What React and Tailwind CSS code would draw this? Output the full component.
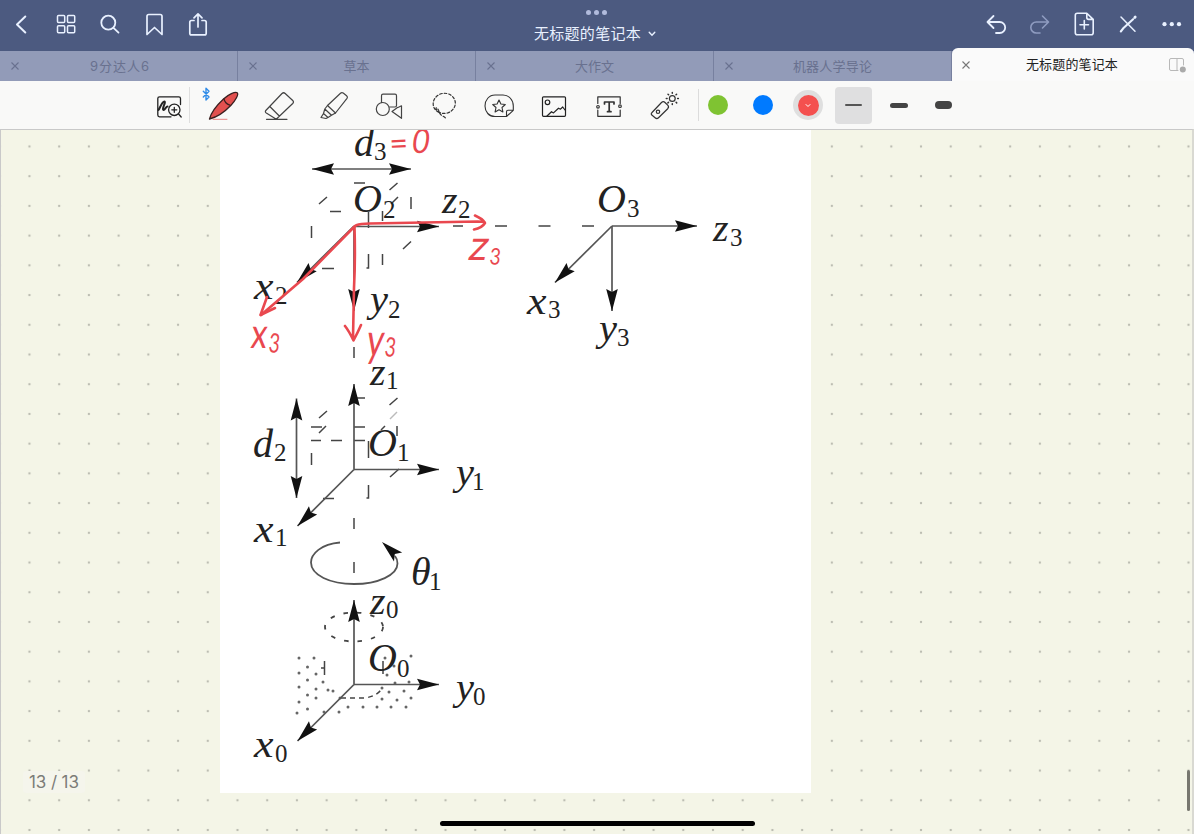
import React from "react";

const Icon = ({ vb, className = "", children }) => {
  const [, , w, h] = vb.split(" ");
  return (
    <svg
      viewBox={vb}
      width={w}
      height={h}
      fill="none"
      strokeLinecap="round"
      strokeLinejoin="round"
      className={"shrink-0 " + className}
    >
      {children}
    </svg>
  );
};

const Close = ({ className = "" }) => (
  <svg viewBox="0 0 10 10" width="10" height="10" fill="none" stroke="currentColor" strokeWidth="1.1" className={"shrink-0 " + className}>
    <path d="M1.5 1.5l7 7M8.5 1.5l-7 7" />
  </svg>
);

const TABS = [
  { name: "9分达人6", spacing: "tracking-[1px] pl-[3px]" },
  { name: "草本", spacing: "tracking-normal" },
  { name: "大作文", spacing: "tracking-normal" },
  { name: "机器人学导论", spacing: "tracking-[0.2px]" },
];

const Header = () => (
  <header className="flex h-[51px] shrink-0 items-start justify-between bg-[#4c5a80] text-[#e9f1ff]">
    <nav className="flex w-[220px]">
      <Icon vb="0 0 44 49" className="stroke-current stroke-2">
        <path d="M25.3 16.5L17 24.5l8.3 8" />
      </Icon>
      <Icon vb="44 0 44 49" className="stroke-current stroke-[1.5]">
        <rect x="57.5" y="15.5" width="7.2" height="7" rx="1" />
        <rect x="67.5" y="15.5" width="7.2" height="7" rx="1" />
        <rect x="57.5" y="25.7" width="7.2" height="7" rx="1" />
        <rect x="67.5" y="25.7" width="7.2" height="7" rx="1" />
      </Icon>
      <Icon vb="88 0 44 49" className="stroke-current stroke-[1.8]">
        <circle cx="108.3" cy="22.7" r="7" />
        <path d="M113.5 27.8l5 4.8" />
      </Icon>
      <Icon vb="132 0 44 49" className="stroke-current stroke-[1.7]">
        <path d="M147 34.5V16.3q0-1.8 1.8-1.8h11.4q1.8 0 1.8 1.8v18.2l-7.5-7z" />
      </Icon>
      <Icon vb="176 0 44 49" className="stroke-current stroke-[1.7]">
        <path d="M194 20.500h-2.500q-1.700 0-1.700 1.700v11q0 1.700 1.700 1.700h13q1.700 0 1.700-1.700v-11q0-1.700-1.700-1.700H202M198 27V14M194 17.800l4-4 4 4" />
      </Icon>
    </nav>
    <div className="flex flex-col items-center pt-[10px]">
      <div className="flex gap-[3px] pb-[8px]">
        <i className="size-[5px] rounded-full bg-[#b1bbdc]" />
        <i className="size-[5px] rounded-full bg-[#b1bbdc]" />
        <i className="size-[5px] rounded-full bg-[#b1bbdc]" />
      </div>
      <div className="flex items-center gap-[7px] pr-[4px]">
        <h1 className="text-[15px] leading-[22px] tracking-[0.3px]">无标题的笔记本</h1>
        <svg width="8" height="6" viewBox="0 0 8 6" fill="none" stroke="currentColor" strokeWidth="1.4" strokeLinecap="round">
          <path d="M1.2 1.3L4 4.3l2.8-3" />
        </svg>
      </div>
    </div>
    <nav className="flex w-[220px]">
      <Icon vb="974 0 44 49" className="stroke-current stroke-[1.8]">
        <path d="M993.5 16l-6 6 6 6M988 22h11.700a5.500 5.500 0 0 1 0 11H996" />
      </Icon>
      <Icon vb="1018 0 44 49" className="stroke-[#8f9cc0] stroke-[1.6]">
        <path d="M1042.500 16l6 6-6 6M1048 22h-11.700a5.500 5.500 0 0 0 0 11h3.700" />
      </Icon>
      <Icon vb="1062 0 44 49" className="stroke-current stroke-[1.6]">
        <path d="M1077.300 13.200h9.500l6.400 6.200v13.300q0 2-2 2h-13.900q-2 0-2-2V15.200q0-2 2-2zM1086.800 13.400v4.200q0 1.800 1.800 1.800h4.400M1084.300 20.500v8.500M1080 24.800h8.500" />
      </Icon>
      <Icon vb="1106 0 44 49" className="stroke-current stroke-[1.5]">
        <path d="M1121 17l14 14.200" />
        <path d="M1120.800 31.500l3-3.800 9.300-8.500" strokeWidth="2.100" />
        <path d="M1134.800 17.400l.4-.4" strokeWidth="2.800" />
      </Icon>
      <Icon vb="1150 0 44 49" className="fill-current">
        <circle cx="1164.500" cy="24.200" r="2.100" />
        <circle cx="1171.800" cy="24.200" r="2.100" />
        <circle cx="1179" cy="24.200" r="2.100" />
      </Icon>
    </nav>
  </header>
);

const TabBar = () => (
  <div className="flex h-[30px] shrink-0 bg-[#929bb8] text-[13px] text-[#69718f]">
    {TABS.map((t) => (
      <div key={t.name} className="flex w-[238px] items-center border-r border-[#77809f] pl-[10px] pr-[10px]">
        <Close />
        <span className={"flex-1 pr-[10px] text-center leading-[30px] " + t.spacing}>{t.name}</span>
      </div>
    ))}
    <div className="-mt-[3px] flex h-[33px] flex-1 items-center rounded-t-[6px] bg-[#fafafa] pl-[9px] pr-[7px] pt-px text-[#222]">
      <Close className="text-[#777]" />
      <span className="flex-1 pl-[5px] text-center tracking-[0.15px]">无标题的笔记本</span>
      <Icon vb="0 0 19 17" className="stroke-[#b8b8b8]">
        <path d="M15.500 8V3q0-1.500-1.500-1.500H3Q1.500 1.500 1.500 3v9q0 1.500 1.500 1.500h7M9 1.500v12" />
        <circle cx="14.800" cy="12.500" r="3" className="fill-[#aaa] stroke-none" />
      </Icon>
    </div>
  </div>
);

const Toolbar = () => (
  <div className="flex h-[48px] shrink-0 items-center bg-[#f9f9f8]">
    <Icon vb="149 81 40 48" className="ml-[149px] stroke-[#222] stroke-[1.3]">
      <path d="M171 116.800h-11.500q-1.700 0-1.700-1.700V98.500q0-1.700 1.700-1.700h19.300q1.700 0 1.700 1.700v6" />
      <path d="M158.500 110c1.500-2 3.500-8.500 5.800-8.500 2.200 0-3 8-.8 8.500 1.300.2 2.500-3.500 4-3.500" strokeWidth="2" />
      <circle cx="174.300" cy="109.800" r="5.700" />
      <path d="M178.600 114l2.600 3M174.300 107.300v5M171.800 109.800h5" />
    </Icon>
    <div className="mr-[6px] h-[36px] w-px bg-[#dedede]" />
    <Icon vb="196 81 55 48">
      <path d="M203.300 91.200l5.700 5.800-3 3V88.300l3 3-5.700 5.800" stroke="#2f8be8" strokeWidth="1.400" />
      <path d="M209.500 119c1.500-6 7-13.500 14-20 5-4.500 11.500-7.500 13.700-6.300 1.800 1.500-1.700 8-6.200 12.500-6 6.300-14.500 12-21.500 13.800z" fill="#e2504f" stroke="#3a2020" strokeWidth="1.300" />
      <path d="M224 98.800c.5 2.500 2.800 5.200 5.800 6.300" stroke="#3a2020" strokeWidth="1.300" />
      <path d="M213 119.300h14" stroke="#e88080" />
    </Icon>
    <Icon vb="251 81 55 48" className="stroke-[#444] stroke-[1.200]">
      <path d="M265.800 110.500l16.200-17q1.600-1.500 3.200 0l7.500 7q1.500 1.500 0 3L277.500 118q-1.500 1.500-3.200 0l-8-5q-1.600-1.200-.5-2.500zM269.800 106.500l9.500 9.500M266.500 119.300H287" />
    </Icon>
    <Icon vb="306 81 55 48" className="stroke-[#444] stroke-[1.200]">
      <path d="M327.500 105.500l13-12.300q1.300-1.200 2.700-.2l3.400 2.700q1.500 1.200.4 2.700L335.500 113z" />
      <path d="M327.500 105.500l-2.700 3.500 6.700 6.300 4-2.300M324.800 109l-1.300 4.500 4.500 4 3.500-2.200M323.500 113.500l-2.500 4 5 1 2-1" />
    </Icon>
    <Icon vb="361 81 55 48" className="stroke-[#444] stroke-[1.200]">
      <path d="M381.500 102.500v-6.800q0-1.500 1.500-1.500h12q1.500 0 1.500 1.500v9.800q0 1.500-1.500 1.500h-5.500" />
      <circle cx="382.800" cy="109" r="6.500" />
      <path d="M397.500 107.500l-5.500 4 9.500 6.800v-12.500l-3 1.500" />
    </Icon>
    <Icon vb="416 81 55 48" className="stroke-[#333] stroke-[1.200]">
      <path d="M439 112.500c-7-3.500-7.500-11.500-2.500-16 4.500-4.300 11.800-4.300 16 0 5.500 5.700 2.500 14-5 16.500-5 1.300-9.500-.500-11-3.500s1.500-2 2.500 2 4.500 4.500 6.500 6.500" strokeDasharray="2.600 2" />
    </Icon>
    <Icon vb="471 81 55 48" className="stroke-[#333] stroke-[1.100]">
      <path d="M506.500 116.500H495c-6 0-10-4.500-10-10.500s4-11 10-11h8c6 0 10.300 5 10.300 11v4.300zM506.500 116.500v-4.700q0-1.500 1.500-1.500h5.300" />
      <path d="M499 100l1.900 4 4.400.5-3.300 3 .9 4.400-3.900-2.200-3.900 2.200.9-4.400-3.300-3 4.400-.5z" />
    </Icon>
    <Icon vb="526 81 55 48" className="stroke-[#222] stroke-[1.200]">
      <rect x="542.500" y="96.800" width="23" height="19.500" rx="1" />
      <circle cx="547.500" cy="102.300" r="2.300" />
      <path d="M547 116l4.500-4.300 2 1.200 5-4.700 2 1 2.200-2.200 2.300 3" />
    </Icon>
    <Icon vb="581 81 55 48" className="stroke-[#333] stroke-[1.200]">
      <path d="M597.800 103.500v-6.700h22.400v6.700M597.800 110v6.300h22.400V110" />
      <circle cx="598" cy="106.800" r="1.300" />
      <circle cx="620" cy="106.200" r="1.300" />
      <path d="M604.500 104v-2h9.500v2M609.200 102v9.500M607.500 111.700h3.500" strokeWidth="1.700" />
    </Icon>
    <Icon vb="636 81 55 48" className="stroke-[#333] stroke-[1.200]">
      <path d="M652 112.500l9.500-10q1.800-1.700 3.500 0l2.700 2.700q1.700 1.700 0 3.500l-9.200 9q-1.700 1.600-3.400 0l-3-2.500q-1.600-1.300-.1-2.700z" />
      <circle cx="658" cy="111.800" r="1.700" />
      <circle cx="672.300" cy="98.500" r="2.900" />
      <path d="M672.300 92.500v.8M672.300 103.800v.8M666.300 98.500h.8M677.600 98.500h.8M668 94.200l.6.600M676.100 102.300l.6.600M676.600 94.200l-.6.600M668.500 102.300l-.6.600" strokeWidth="1.500" />
    </Icon>
    <div className="ml-[7px] mr-[9px] h-[32px] w-px bg-[#dcdcdc]" />
    <i className="size-[20px] rounded-full bg-[#7fc332]" />
    <i className="ml-[25px] size-[20px] rounded-full bg-[#007aff]" />
    <div className="ml-[20px] flex size-[30px] items-center justify-center rounded-full bg-[#dfdfdf]">
      <div className="flex size-[21px] items-center justify-center rounded-full bg-[#f4504f]">
        <svg width="6" height="5" viewBox="0 0 6 5" fill="none" stroke="#fff" strokeLinecap="round">
          <path d="M1 1.500l2 2 2-2" />
        </svg>
      </div>
    </div>
    <div className="ml-[12px] flex size-[37px] items-center justify-center rounded-[4px] bg-[#dfdfe0]">
      <i className="h-[2px] w-[17px] rounded-full bg-[#555]" />
    </div>
    <i className="ml-[18px] h-[5px] w-[18px] rounded-full bg-[#444]" />
    <i className="ml-[27px] h-[8px] w-[17px] rounded-full bg-[#444]" />
  </div>
);

/* Line from (x1,y1) to a stealth arrowhead at (x2,y2). */
const Arrow = ({ x1, y1, x2, y2, both }) => {
  const a = (Math.atan2(y2 - y1, x2 - x1) * 180) / Math.PI;
  const head = "0,0 -22,-5.8 -19,0 -22,5.8";
  return (
    <g>
      <line x1={x1} y1={y1} x2={x2} y2={y2} stroke="#555" strokeWidth="1.700" />
      <polygon points={head} fill="#111" transform={`translate(${x2} ${y2}) rotate(${a})`} />
      {both && <polygon points={head} fill="#111" transform={`translate(${x1} ${y1}) rotate(${a + 180})`} />}
    </g>
  );
};

/* symbol, x, baseline, subscript, x, baseline */
const LABELS = [
  ["d", 354, 156, "3", 374, 160],
  ["O", 353, 212, "2", 383, 217.5],
  ["z", 442, 213, "2", 458, 218],
  ["x", 254, 299, "2", 275, 304],
  ["y", 370, 312, "2", 388, 318],
  ["z", 370, 385, "1", 386, 389],
  ["d", 253, 457, "2", 274, 461],
  ["O", 368, 456, "1", 397, 461],
  ["y", 456, 484.5, "1", 472, 490],
  ["x", 254, 541.5, "1", 275, 546],
  ["θ", 411, 584.5, "1", 429, 590],
  ["z", 370, 613.5, "0", 386, 618],
  ["O", 368, 671, "0", 397, 677],
  ["y", 456, 700, "0", 473, 705],
  ["x", 254, 757, "0", 275, 762],
  ["O", 597, 212, "3", 627, 217],
  ["z", 713, 241, "3", 730, 246],
  ["x", 527, 313.5, "3", 548, 318],
  ["y", 599, 341, "3", 617, 346],
];

/* Letters without ascenders are set a little smaller and wider. */
const STRETCH = { x: 19.500, y: 18, z: 15.500 };

const DASHES =
  "M354 183h11M319 204l8-7M389.500 190l8-7M391 204l7-7M330 211.500h11M411 197v12M311.500 226v12M368.500 212v16M382.500 211v10M403 249l8-7.500M322 268.500h12M382.500 254v11M368.500 254v14h-2M354 347v11M453 226h10M495 226h12M538.500 226h12M582 226h12" +
  "M354 398h11M319 418l8-7M389.500 405l8-7M311 427h11M319 433l7-7M311 440.500h10M331 440.500h11M354 427h11M354 440.500h11M397 426v10M368.500 441v17M381 430l4-4M311.500 453v12M390 477l9-8M368.500 485v13h-2M323 498.500h11M354 518v11M354 562v11M383 661v13M324.500 661v14M321 668h4";

const DOTS = [
  [299, 658], [314, 658], [307.500, 667], [299, 673], [316, 674], [307.500, 680], [323, 682], [299, 687], [316, 689],
  [307.500, 695], [328, 690], [299, 702], [316, 698], [307.500, 709], [324, 712], [333, 691], [340, 698], [297, 713],
  [385, 658], [394, 666], [387, 675], [395, 683], [409, 682], [411, 656], [382, 688], [389, 692], [404, 691],
  [382, 699], [397, 700], [411, 698], [348, 707], [363, 707], [377, 707], [391, 707], [406, 707], [339, 712],
];

const Figure = () => (
  <svg viewBox="220 130 591 663" width="591" height="663" className="block">
    <g fill="none" stroke="#444" strokeWidth="1.500">
      <path d={DASHES} />
      <path d="M340 542.500C321 544 311 554 311 562.500C311 575 330 584 354 584S397.500 575 397.500 563.500C397.500 561 397 558.500 395 556" stroke="#555" strokeWidth="1.800" />
      <ellipse cx="354" cy="627" rx="29" ry="14.500" strokeDasharray="4.500 9" strokeWidth="1.800" />
      <path d="M341 698h23q11-1 17-8" strokeDasharray="5 4" />
      <path d="M390 419l7-7" stroke="#bbb" />
    </g>
    <g fill="#666">
      {DOTS.map(([x, y], i) => (
        <circle key={i} cx={x} cy={y} r="1.500" />
      ))}
    </g>
    <Arrow x1={312} y1={169} x2={411} y2={169} both />
    <Arrow x1={296.500} y1={398.500} x2={296.500} y2={498} both />
    <Arrow x1={354} y1={226.500} x2={439} y2={226.500} />
    <Arrow x1={354} y1={226} x2={354} y2={311} />
    <Arrow x1={354} y1={226} x2={297} y2={282.500} />
    <Arrow x1={612} y1={226} x2={697} y2={226} />
    <Arrow x1={612} y1={226} x2={612} y2={311} />
    <Arrow x1={612} y1={226} x2={555} y2={282.500} />
    <Arrow x1={354} y1={469.500} x2={439} y2={469.500} />
    <Arrow x1={354} y1={469.500} x2={354} y2={384} />
    <Arrow x1={354} y1={469.500} x2={297.500} y2={526} />
    <Arrow x1={354} y1={684.500} x2={439} y2={684.500} />
    <Arrow x1={354} y1={684.500} x2={354} y2={600} />
    <Arrow x1={354} y1={684.500} x2={297.500} y2={741} />
    <polygon points="0,0 -22,-6 -17.500,0 -22,6" fill="#111" transform="translate(382 542) rotate(-137)" />
    <g className="fill-[#222] font-['Liberation_Serif',serif]">
      {LABELS.map(([s, x, y, n, nx, ny], i) => (
        <g key={i}>
          {STRETCH[s] ? (
            <text x={x} y={y} textLength={STRETCH[s]} lengthAdjust="spacingAndGlyphs" className="text-[37px] italic">{s}</text>
          ) : (
            <text x={x} y={y} className="text-[40px] italic">{s}</text>
          )}
          <text x={nx} y={ny} className="text-[25px]">{n}</text>
        </g>
      ))}
    </g>
    <g fill="none" stroke="#e9484f" strokeWidth="2.600" strokeLinecap="round" strokeLinejoin="round">
      <path d="M261 315L303 279L355 226C358 223.500 362 224 370 223.500L478 221.500L484.500 222M475 215.500Q483 219 485 223Q482 228 474 229.500" />
      <path d="M267 297L260.500 315L275 308" />
      <path d="M354.500 227Q355.500 260 354 288L353 338M345 326Q349 331 353.500 340.500Q358 332 361 325" />
    </g>
    <g className="fill-[#e9484f] font-['Lato',sans-serif]">
      <text transform="translate(390 155) rotate(-3)" className="text-[32px]">=</text>
      <text transform="translate(411 153) skewX(-8)" className="text-[34px]" textLength="17" lengthAdjust="spacingAndGlyphs">0</text>
      <text transform="translate(467 260) skewX(-12)" className="text-[42px]" textLength="19" lengthAdjust="spacingAndGlyphs">z</text>
      <text transform="translate(489 264) rotate(6)" className="text-[23px]" textLength="11" lengthAdjust="spacingAndGlyphs">3</text>
      <text transform="translate(250 348) skewX(-6)" className="text-[42px]" textLength="16" lengthAdjust="spacingAndGlyphs">x</text>
      <text transform="translate(268 352) rotate(6)" className="text-[27px]" textLength="11" lengthAdjust="spacingAndGlyphs">3</text>
      <text transform="translate(365 356) skewX(-8)" className="text-[46px]" textLength="17" lengthAdjust="spacingAndGlyphs">y</text>
      <text transform="translate(384 356) rotate(6)" className="text-[27px]" textLength="11" lengthAdjust="spacingAndGlyphs">3</text>
    </g>
  </svg>
);

export default function App() {
  return (
    <div className="flex h-[834px] w-[1194px] flex-col overflow-hidden font-['Inter','Noto_Sans_CJK_SC',sans-serif]">
      <Header />
      <TabBar />
      <Toolbar />
      <main className="relative flex-1 overflow-hidden border-l border-r-2 border-t border-[#c9c9c9] border-r-[#d9d9d2] bg-[#f4f5e7] bg-[radial-gradient(circle,#bcbdb2_1.1px,transparent_1.6px)] bg-[length:29.73px_29.73px] bg-[position:13.6px_1.6px]">
        <div className="ml-[219px] h-[663px] w-[591px] bg-white">
          <Figure />
        </div>
        <p className="absolute left-[22px] top-[641px] rounded-[3px] bg-[#f5f5ec] px-[6px] text-[17px] leading-[22px] tracking-[-0.1px] text-[#7c7c78]">13 / 13</p>
        <div className="absolute right-[2px] top-[640px] h-[41px] w-[3px] rounded-full bg-[#77776f]" />
        <div className="absolute bottom-[8px] left-[439px] h-[5px] w-[315px] rounded-full bg-black" />
      </main>
    </div>
  );
}
